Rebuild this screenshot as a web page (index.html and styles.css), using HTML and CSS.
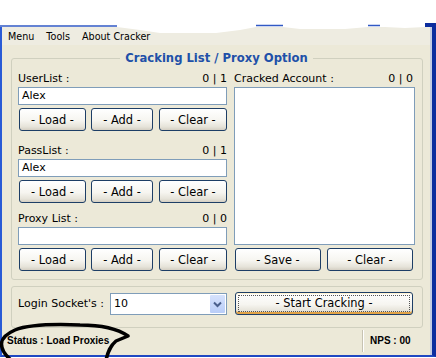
FILE: index.html
```html
<!DOCTYPE html>
<html>
<head>
<meta charset="utf-8">
<link rel="stylesheet" href="styles.css">
</head>
<body>
<div class="top"></div>
<div class="window">
  <div class="inner">
    <div class="menubar"><span class="mi">Menu</span><span class="mi">Tools</span><span class="mi">About Cracker</span></div>
    <fieldset class="group main">
      <legend class="title">Cracking List / Proxy Option</legend>
      <div class="cols">
        <div class="left">
          <div class="sec">
            <div class="lab"><span>UserList :</span><span>0 | 1</span></div>
            <div class="tb">Alex</div>
            <div class="btns"><button class="xp b-load">- Load -</button><button class="xp b-add">- Add -</button><button class="xp b-clear">- Clear -</button></div>
          </div>
          <div class="sec sec2">
            <div class="lab"><span>PassList :</span><span>0 | 1</span></div>
            <div class="tb">Alex</div>
            <div class="btns"><button class="xp b-load">- Load -</button><button class="xp b-add">- Add -</button><button class="xp b-clear">- Clear -</button></div>
          </div>
          <div class="sec sec3">
            <div class="lab"><span>Proxy List :</span><span>0 | 0</span></div>
            <div class="tb"></div>
            <div class="btns"><button class="xp b-load">- Load -</button><button class="xp b-add">- Add -</button><button class="xp b-clear">- Clear -</button></div>
          </div>
        </div>
        <div class="right">
          <div class="lab rlab"><span>Cracked Account :</span><span>0 | 0</span></div>
          <div class="list"></div>
          <div class="rbtns"><button class="xp b-half">- Save -</button><button class="xp b-half">- Clear -</button></div>
        </div>
      </div>
    </fieldset>
    <fieldset class="group group2">
      <div class="row2">
        <span class="lab2">Login Socket's :</span>
        <div class="combo"><span class="cval">10</span><span class="carrow"><svg width="15" height="18" viewBox="0 0 15 18"><path d="M4 7.5 L7.5 11 L11 7.5" fill="none" stroke="#4a5f8c" stroke-width="2"/></svg></span></div>
        <button class="xp start"><span class="focus">- Start Cracking -</span></button>
      </div>
    </fieldset>
    <div class="status">
      <div class="st1">Status : Load Proxies</div>
      <div class="st2">NPS : 00</div>
    </div>
  </div>
</div>
<svg class="tear" width="436" height="40" viewBox="0 0 436 40">
  <path d="M0 0 H436 V24 H426 L425 27 L405 28 L385 27 L368 27 L345 29 L300 29 L283 27 L256 27 L240 30 L216 33 L160 33 L140 30 L117 27 L0 27 Z" fill="#fff"/>
  <path d="M0 26 H117" stroke="#3159c4" stroke-width="1.5"/>
  <path d="M256 25.5 H283" stroke="#3159c4" stroke-width="1.5"/>
  <path d="M368 25.5 H380" stroke="#3159c4" stroke-width="1.5"/>
  <path d="M425 23 H436 V40 H432 V27 H425 Z" fill="#0c2d9e"/>
</svg>
<svg class="mark" width="140" height="40" viewBox="0 318 140 40">
  <path d="M106 360 C108 352 110 346 116 341 L128 336 C118 329 100 325 80 325 C55 324 30 324 15 330 C6 334 1.5 338 1.5 344 C1.5 350 5 355 11 360" fill="none" stroke="#000" stroke-width="3.5" stroke-linejoin="round"/>
</svg>
</body>
</html>
```
FILE: styles.css
```css
html, body {
  margin: 0;
  padding: 0;
}
body {
  width: 436px;
  height: 358px;
  overflow: hidden;
  position: relative;
  background: #fff;
  font-family: "DejaVu Sans", sans-serif;
  font-size: 11px;
  color: #000;
}
.top {
  height: 27px;
}
.window {
  box-sizing: border-box;
  width: 436px;
  height: 330px;
  background: #ECE9D8;
  border-left: 2px solid #2a5bd6;
  border-right: 4px solid #0c2d9e;
  border-bottom: 2px solid #1f48c2;
}
.inner {
  height: 100%;
  border-right: 2px solid #c3cbe2;
}
.menubar {
  display: flex;
  align-items: center;
  height: 18px;
  font-size: 9.6px;
  background: #EEECE1;
}
.mi {
  padding: 0 6px;
}
.group {
  margin: 6px 7px 0 9px;
  border: 1px solid #D0D0BF;
  border-radius: 3px;
  min-width: 0;
}
.main {
  padding: 6px 7px 8px 6px;
}
.title {
  margin: 0 auto;
  padding: 0 5px;
  font-weight: bold;
  font-size: 11.6px;
  line-height: 14px;
  color: #2150a8;
}
.cols {
  display: flex;
  gap: 7px;
}
.left {
  width: 209px;
}
.right {
  width: 181px;
}
.lab {
  display: flex;
  justify-content: space-between;
  height: 16px;
  line-height: 16px;
}
.rlab {
  padding-right: 2px;
}
.tb {
  box-sizing: border-box;
  height: 18px;
  border: 1px solid #7F9DB9;
  background: #fff;
  padding-left: 3px;
  line-height: 16px;
}
.sec2 {
  margin-top: 12px;
}
.sec3 {
  margin-top: 8px;
}
.btns {
  display: flex;
  margin-top: 3px;
  padding-left: 1px;
}
.xp {
  box-sizing: border-box;
  height: 23px;
  padding: 0;
  border: 1px solid #1d3e66;
  border-radius: 3px;
  background: linear-gradient(#ffffff, #f6f5f0 55%, #e6e3d9 85%, #d4cfc3);
  font-family: "DejaVu Sans", sans-serif;
  font-size: 11.4px;
  color: #000;
}
.b-load {
  width: 67px;
}
.b-add {
  width: 62px;
  margin-left: 5px;
}
.b-clear {
  width: 68px;
  margin-left: 6px;
}
.list {
  box-sizing: border-box;
  height: 158px;
  border: 1px solid #7F9DB9;
  background: #fff;
}
.rbtns {
  display: flex;
  gap: 6px;
  margin-top: 3px;
  padding-left: 1px;
}
.b-half {
  width: 86px;
}
.group2 {
  padding: 5px 7px 12px 6px;
}
.row2 {
  display: flex;
  align-items: center;
  height: 23px;
}
.lab2 {
  width: 92px;
}
.combo {
  box-sizing: border-box;
  width: 117px;
  height: 22px;
  border: 1px solid #7F9DB9;
  background: #fff;
  display: flex;
  align-items: stretch;
}
.cval {
  flex: 1;
  padding-left: 3px;
  line-height: 20px;
}
.carrow {
  width: 15px;
  margin: 1px;
  background: linear-gradient(#d6e2fc, #b9cdf8);
  border-radius: 1px;
  display: flex;
  align-items: center;
  justify-content: center;
}
.carrow svg {
  display: block;
}
.start {
  width: 178px;
  margin-left: 8px;
  display: flex;
  align-items: stretch;
  box-shadow: inset 0 -2px 0 #e2a448, inset 0 1px 0 #fff3d2;
}
.focus {
  flex: 1;
  margin: 2px;
  border: 1px dotted #555;
  line-height: 15px;
  text-align: center;
}
.status {
  display: flex;
  height: 22px;
  margin-top: 2px;
  font-family: "Liberation Sans", Arial, sans-serif;
  font-weight: bold;
  font-size: 10px;
  line-height: 22px;
}
.st1 {
  width: 355px;
  padding-left: 5px;
  border-right: 1px solid #c7c3b2;
}
.st2 {
  padding-left: 6px;
  border-left: 1px solid #fff;
}
.tear {
  position: absolute;
  left: 0;
  top: 0;
}
.mark {
  position: absolute;
  left: 0;
  top: 318px;
}
```
